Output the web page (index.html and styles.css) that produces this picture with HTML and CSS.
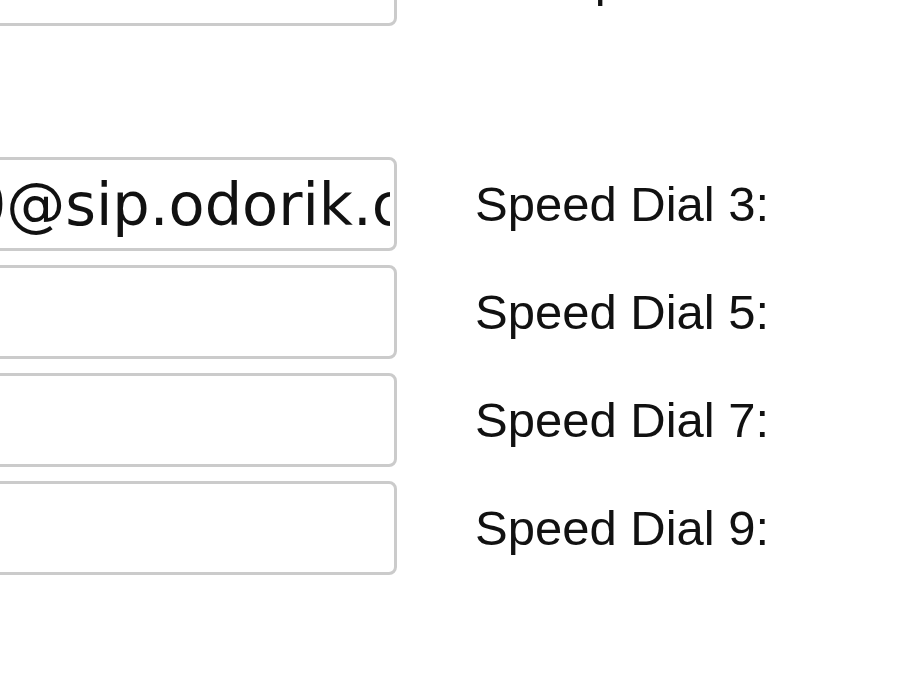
FILE: index.html
```html
<!DOCTYPE html>
<html lang="en">
<head>
<meta charset="utf-8">
<title>Speed Dial</title>
<link rel="stylesheet" href="styles.css">
</head>
<body>
<form class="form">
  <input class="field" type="text" value="">
  <label class="label">Pickup Code:</label>

  <div class="section-break"></div>

  <input class="field" type="text" value="800100@sip.odorik.cz">
  <label class="label">Speed Dial 3:</label>

  <input class="field" type="text" value="">
  <label class="label">Speed Dial 5:</label>

  <input class="field" type="text" value="">
  <label class="label">Speed Dial 7:</label>

  <input class="field" type="text" value="">
  <label class="label">Speed Dial 9:</label>
</form>
</body>
</html>
```

FILE: styles.css
```css
html, body {
  margin: 0;
  padding: 0;
  background: #ffffff;
  overflow: hidden;
}

.form {
  display: grid;
  grid-template-columns: 633px auto;
  column-gap: 78px;
  row-gap: 14px;
  align-items: center;
  margin-left: -236px;
  margin-top: -68px;
  width: 1200px;
}

.field {
  box-sizing: border-box;
  width: 633px;
  height: 94px;
  padding: 0 4px 0 14px;
  border: 3px solid #cbcbcb;
  border-radius: 8px;
  background: #ffffff;
  font-family: "DejaVu Sans", sans-serif;
  font-size: 59px;
  color: #111111;
  outline: none;
}

.label {
  font-family: "Liberation Sans", Arial, sans-serif;
  font-size: 49px;
  color: #111111;
  white-space: nowrap;
}

.section-break {
  grid-column: 1 / span 2;
  height: 103px;
}
```
